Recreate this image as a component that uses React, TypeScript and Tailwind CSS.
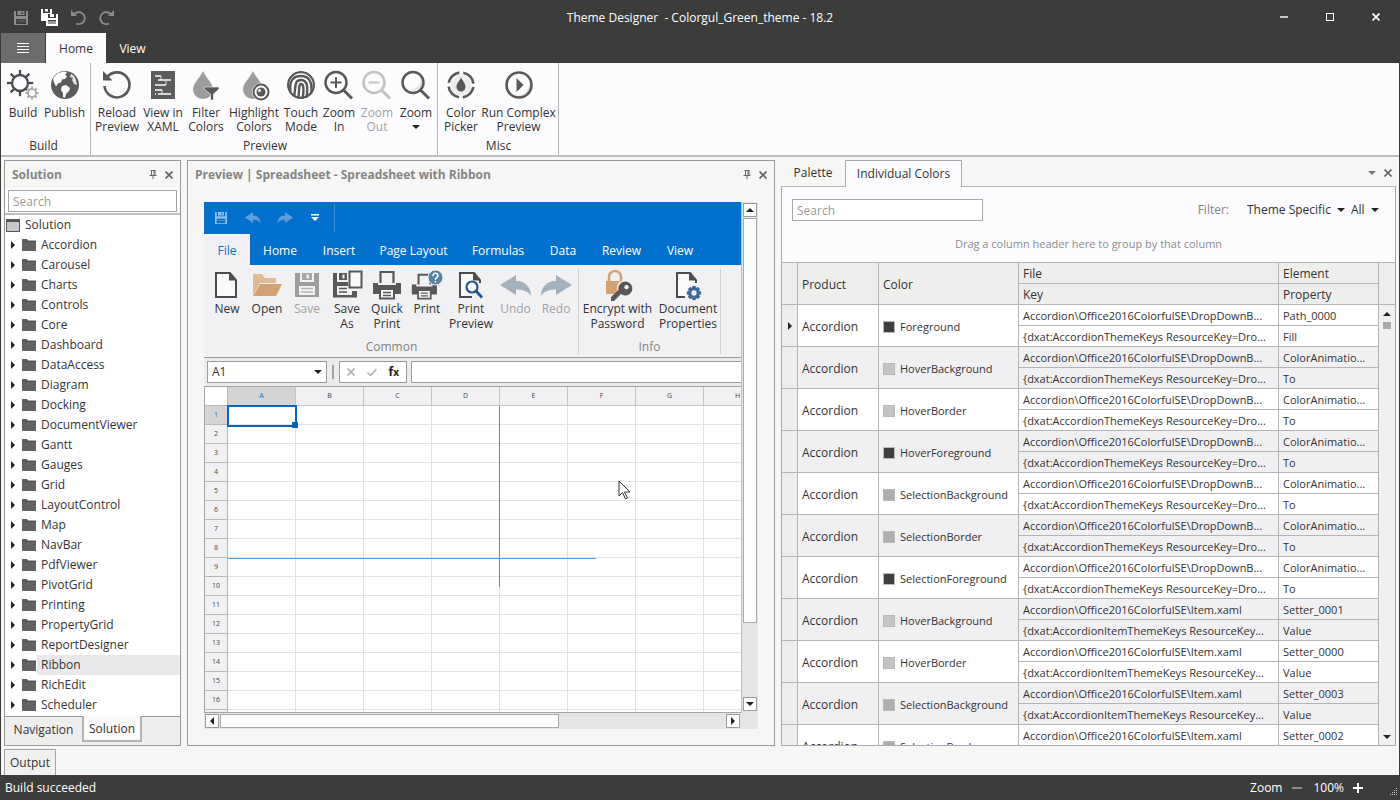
import React from 'react';
import clsx from 'clsx';

const TREE = [
  'Accordion', 'Carousel', 'Charts', 'Controls', 'Core', 'Dashboard', 'DataAccess', 'Diagram',
  'Docking', 'DocumentViewer', 'Gantt', 'Gauges', 'Grid', 'LayoutControl', 'Map', 'NavBar',
  'PdfViewer', 'PivotGrid', 'Printing', 'PropertyGrid', 'ReportDesigner', 'Ribbon', 'RichEdit', 'Scheduler',
];

const DROP_FILE = 'Accordion\\Office2016ColorfulSE\\DropDownB...';
const DROP_KEY = '{dxat:AccordionThemeKeys ResourceKey=Dro...';
const ITEM_FILE = 'Accordion\\Office2016ColorfulSE\\Item.xaml';
const ITEM_KEY = '{dxat:AccordionItemThemeKeys ResourceKey...';

const DARK = 'bg-[#3f3f40]';
const LIGHT = 'bg-[#c4c4c4]';
const MID = 'bg-[#adaeb0]';

const ROWS = [
  { color: 'Foreground', swatch: DARK, file: DROP_FILE, key: DROP_KEY, element: 'Path_0000', property: 'Fill' },
  { color: 'HoverBackground', swatch: LIGHT, file: DROP_FILE, key: DROP_KEY, element: 'ColorAnimatio...', property: 'To' },
  { color: 'HoverBorder', swatch: LIGHT, file: DROP_FILE, key: DROP_KEY, element: 'ColorAnimatio...', property: 'To' },
  { color: 'HoverForeground', swatch: DARK, file: DROP_FILE, key: DROP_KEY, element: 'ColorAnimatio...', property: 'To' },
  { color: 'SelectionBackground', swatch: MID, file: DROP_FILE, key: DROP_KEY, element: 'ColorAnimatio...', property: 'To' },
  { color: 'SelectionBorder', swatch: MID, file: DROP_FILE, key: DROP_KEY, element: 'ColorAnimatio...', property: 'To' },
  { color: 'SelectionForeground', swatch: DARK, file: DROP_FILE, key: DROP_KEY, element: 'ColorAnimatio...', property: 'To' },
  { color: 'HoverBackground', swatch: LIGHT, file: ITEM_FILE, key: ITEM_KEY, element: 'Setter_0001', property: 'Value' },
  { color: 'HoverBorder', swatch: LIGHT, file: ITEM_FILE, key: ITEM_KEY, element: 'Setter_0000', property: 'Value' },
  { color: 'SelectionBackground', swatch: MID, file: ITEM_FILE, key: ITEM_KEY, element: 'Setter_0003', property: 'Value' },
  { color: 'SelectionBorder', swatch: MID, file: ITEM_FILE, key: ITEM_KEY, element: 'Setter_0002', property: 'Value' },
];

const SHEET_COLUMNS = ['A', 'B', 'C', 'D', 'E', 'F', 'G', 'H'];
// the last row only peeks out from under the bottom edge, so it has no number
const SHEET_ROWS = ['1', '2', '3', '4', '5', '6', '7', '8', '9', '10', '11', '12', '13', '14', '15', '16', ''];

/* ---------- small glyphs ---------- */

function Caret({ dir, className = 'text-[#222]' }: { dir: 'up' | 'down' | 'left' | 'right'; className?: string }) {
  const paths = { down: 'M0 2h8L4 6z', up: 'M0 6h8L4 2z', right: 'M2 0v8l4-4z', left: 'M6 0v8L2 4z' };
  return (
    <svg viewBox="0 0 8 8" className={clsx('size-2 shrink-0', className)} fill="currentColor">
      <path d={paths[dir]} />
    </svg>
  );
}

function CloseGlyph({ className }: { className?: string }) {
  return (
    <svg viewBox="0 0 8 8" className={clsx('size-2', className)} fill="none" stroke="currentColor" strokeWidth="1.7">
      <path d="M.5.5l7 7M7.5.5l-7 7" />
    </svg>
  );
}

function PinGlyph() {
  return (
    <svg viewBox="0 0 8 9" className="h-[9px] w-2" fill="none" stroke="#666" strokeWidth="1">
      <path d="M1.5.5h5M2.5.5v5M5 .5v5M6 .5v5M.5 5.5h7M4 6v3" />
    </svg>
  );
}

function Folder() {
  return (
    <svg viewBox="0 0 14 12" className="h-3 w-[14px] shrink-0">
      <path d="M0 0h5l1 1.500h8V12H0z" fill="#626262" />
      <path d="M0 2.500h14" stroke="#4c4c50" strokeWidth=".8" />
    </svg>
  );
}

function Floppy({ size }: { size: string }) {
  return (
    <svg viewBox="0 0 14 14" className={size} fill="currentColor">
      <path fillRule="evenodd" d="M0 0h2v5h10V0h2v14H0zM2 8v5h10V8z" />
      <path fillRule="evenodd" d="M3.500 0h7v4h-7zM7.500 1v2h1.500V1z" />
      <path d="M3 9.500h8v1H3z" opacity=".6" />
    </svg>
  );
}

/* ---------- ribbon icons, 32x32 ---------- */

function Gear({ cx, cy, r, color, width, teeth = 8 }: { cx: number; cy: number; r: number; color: string; width: number; teeth?: number }) {
  return (
    <g stroke={color} strokeWidth={width} fill="none">
      <circle cx={cx} cy={cy} r={r} />
      {Array.from({ length: teeth }, (_, i) => (
        <path key={i} d={`M${cx} ${cy - r}v${-r * 0.65}`} transform={`rotate(${(360 / teeth) * i} ${cx} ${cy})`} />
      ))}
    </g>
  );
}

function BigIcon({ children }: { children: React.ReactNode }) {
  return (
    <svg viewBox="0 0 32 32" className="size-8 shrink-0" fill="none">
      {children}
    </svg>
  );
}

const G = '#58585a';

const BuildIcon = (
  <BigIcon>
    <Gear cx={13} cy={14} r={8} color="#4c4c50" width={2.3} />
    <circle cx="25" cy="24" r="6" fill="#fcfcfe" />
    <Gear cx={25} cy={24} r={4} color="#a3a3a3" width={1.7} />
  </BigIcon>
);

const PublishIcon = (
  <BigIcon>
    <circle cx="16" cy="16" r="14" fill="#5c5c5e" />
    <path d="M5 8l4-4 6-1.500 3 1-2 2.500 2 1-2 3-3 .5-1 3-3 1-2 3-2-4-1-3z" fill="#fcfcfe" />
    <path d="M13 17l4-1 4 3-1 3-3 3-1 4-2-1 0-4-2-3z" fill="#fcfcfe" />
    <path d="M22 5l3 2 2 4 1 5-3-1-2-4 1-2-3-1z" fill="#e4e4e6" />
  </BigIcon>
);

const ReloadIcon = (
  <BigIcon>
    <path d="M5.500 9A12.500 12.500 0 1 1 3.500 17" stroke={G} strokeWidth="2.600" />
    <path d="M2 2v9.500h9.500z" fill={G} />
  </BigIcon>
);

const XamlIcon = (
  <BigIcon>
    <path d="M4 2h24v28H4z" fill="#5c5c5e" />
    <path d="M8 7h6M11 11h13M8 16h11M8 21h7M11 25h13M8 25h1" stroke="#fcfcfe" strokeWidth="1.600" />
    <path d="M14 7v4M19 12v4M15 21v4" stroke="#fcfcfe" strokeWidth=".8" />
  </BigIcon>
);

const FilterIcon = (
  <BigIcon>
    <path d="M13 2c3 7 10 12 10 18.500a10 9.500 0 0 1-20 0C3 14 10 9 13 2z" fill="#9c9c9c" />
    <path d="M14 18h15v2l-5.500 5v6h-3v-6L14 20z" fill={G} stroke="#fcfcfe" strokeWidth=".6" />
  </BigIcon>
);

const HighlightIcon = (
  <BigIcon>
    <path d="M15 2c3 7 10 12 10 18.500a10 9.500 0 0 1-20 0C5 14 12 9 15 2z" fill="#9c9c9c" />
    <circle cx="23" cy="23" r="9" fill="#fcfcfe" />
    <circle cx="23" cy="23" r="7.500" stroke={G} strokeWidth="2" />
    <circle cx="23" cy="23" r="4.500" fill={G} />
    <circle cx="21.500" cy="21.500" r="1.500" fill="#fff" />
  </BigIcon>
);

const TouchIcon = (
  <BigIcon>
    <clipPath id="finger"><circle cx="16" cy="16" r="14" /></clipPath>
    <g stroke="#58585a" strokeWidth="2.400" clipPath="url(#finger)">
      <circle cx="16" cy="16" r="13" />
      <path d="M5.500 23C4 12 8 7 16 7s12 6 10 18" />
      <path d="M9 28C11 18 9 11 16 11s7 8 5.500 18" />
      <path d="M13 30C15 22 13 15 16 15s3 6 1.500 15" />
    </g>
  </BigIcon>
);

function Magnifier({ sign, color = G }: { sign?: string; color?: string }) {
  return (
    <BigIcon>
      {!sign && <path d="M20 7a10 10 0 0 1-13 13c6 4 14 0 15-6 0-3 0-5-2-7z" fill="#dadadc" />}
      <circle cx="13" cy="13.500" r="10.500" stroke={color} strokeWidth="2.500" />
      <path d="M20.500 21l8.500 8.500" stroke={color} strokeWidth="3" />
      {sign && <path d={sign} stroke={color} strokeWidth="2" />}
    </BigIcon>
  );
}

const PickerIcon = (
  <BigIcon>
    <circle cx="16" cy="16" r="10.500" fill="#ececee" />
    <circle cx="16" cy="16" r="12.500" stroke={G} strokeWidth="2.600" strokeDasharray="15.630 4" strokeDashoffset="-2" />
    <path d="M16 8.500c2 4 4.500 6 4.500 9.500a4.500 4.500 0 0 1-9 0c0-3.500 2.500-5.500 4.500-9.500z" fill={G} />
  </BigIcon>
);

const RunIcon = (
  <BigIcon>
    <path d="M26 10a12 12 0 0 1-17 16c8 3 19-2 17-16z" fill="#e2e2e4" />
    <circle cx="16" cy="16" r="12.500" stroke={G} strokeWidth="2.600" />
    <path d="M13.500 9v14l7-7z" fill={G} />
  </BigIcon>
);

/* ---------- icons of the previewed spreadsheet ---------- */

const NewIcon = (
  <BigIcon>
    <path d="M5 4h14l6 7v17H5z" stroke="#4c4c50" strokeWidth="2" fill="#fafafa" />
    <path d="M18 4v7.500h7z" fill="#4c4c50" />
  </BigIcon>
);

const OpenIcon = (
  <BigIcon>
    <path d="M2 5h9l3 4h11v5H9L2 26z" fill="#dfba94" />
    <path d="M9 15h22l-6 12H2z" fill="#d2a274" />
  </BigIcon>
);

const SaveIcon = (
  <BigIcon>
    <path d="M4 4h5v9h14V4h5v24H4z" fill="#9d9d9f" />
    <path d="M11 4h10v7H11zM15.500 5.500v4h2.500v-4z" fill="#a8a8aa" fillRule="evenodd" />
    <path d="M8 17h16v9H8z" fill="#f1f1f3" />
    <path d="M10 19.500h12M10 23h12" stroke="#b4b4b6" strokeWidth="1.500" />
  </BigIcon>
);

const SaveAsIcon = (
  <BigIcon>
    <path d="M2 4h4v9h11v4H6v9h15v-4h5v6.500H2z" fill={G} />
    <path d="M8 4h8v7H8zM11.500 5.500v4h2v-4z" fill={G} fillRule="evenodd" />
    <path d="M8 19.500h8M8 23h8" stroke={G} strokeWidth="1.500" />
    <path d="M18.500 2.500h12v16h-12z" stroke={G} strokeWidth="2" fill="#f8f8fa" />
  </BigIcon>
);

const PrinterBody = (
  <>
    <path d="M9.500 14V3h13v11" stroke={G} strokeWidth="2.200" />
    <path d="M2 14h5v2h18v-2h5v11H2z" fill={G} />
    <path d="M9 20h14v9.500H9z" fill="#f8f8fa" stroke={G} strokeWidth="2" />
    <path d="M12 23.500h8M12 26.500h8" stroke={G} strokeWidth="1.400" />
  </>
);

const QuickPrintIcon = <BigIcon>{PrinterBody}</BigIcon>;

const PrintIcon = (
  <BigIcon>
    <g transform="translate(-1 3) scale(.9)">{PrinterBody}</g>
    <circle cx="24.500" cy="8.500" r="7.500" fill="#5583a0" stroke="#f1f1f3" strokeWidth="1" />
    <path d="M22 7c0-3.500 5-3.500 5-.5 0 2-2.500 2-2.500 4.200M24.500 12v1.600" stroke="#fff" strokeWidth="1.600" />
  </BigIcon>
);

const PrintPreviewIcon = (
  <BigIcon>
    <path d="M25 14v-3l-6-7H5v24h12" stroke="#4c4c50" strokeWidth="2" fill="#fafafa" />
    <path d="M18 4v7.500h7z" fill="#4c4c50" />
    <circle cx="17" cy="18" r="5.500" stroke="#22578f" strokeWidth="2.200" fill="#fafafa" />
    <path d="M21 22l6 6.500" stroke="#22578f" strokeWidth="2.800" />
  </BigIcon>
);

const UndoIcon = (
  <BigIcon>
    <path d="M0 16L16 6v6c9 0 15 6 15 15-3-5-8-6.500-15-6.500V26z" fill="#a3b1bf" />
  </BigIcon>
);

const RedoIcon = (
  <BigIcon>
    <path d="M32 16L16 6v6C7 12 1 18 1 27c3-5 8-6.500 15-6.500V26z" fill="#a3b1bf" />
  </BigIcon>
);

const EncryptIcon = (
  <BigIcon>
    <path d="M7 13V8a6 6 0 0 1 12 0v5" stroke="#d2a274" strokeWidth="2.500" />
    <path d="M4 12h17v13H4z" fill="#d2a274" />
    <circle cx="23" cy="19" r="8" fill="#f1f1f3" />
    <path fillRule="evenodd" d="M23 12.500a7 7 0 1 1-4 12.500L12 32H9v-4l7.500-7A7 7 0 0 1 23 12.500zM24.500 16a2.200 2.200 0 1 0 .1 0z" fill={G} />
  </BigIcon>
);

const PropertiesIcon = (
  <BigIcon>
    <path d="M24 14v-3l-6-7H5v24h8" stroke="#4c4c50" strokeWidth="2" fill="#fafafa" />
    <path d="M17 4v7.500h7z" fill="#4c4c50" />
    <circle cx="22" cy="24" r="8" fill="#f1f1f3" />
    <Gear cx={22} cy={24} r={4.300} color="#3c699b" width={3.300} />
  </BigIcon>
);

/* ---------- shared pieces ---------- */

interface RibbonButtonProps {
  icon: React.ReactNode;
  lines: string[];
  width: string;
  disabled?: boolean;
  arrow?: boolean;
  sheet?: boolean;
}

function RibbonButton({ icon, lines, width, disabled, arrow, sheet }: RibbonButtonProps) {
  return (
    <button
      type="button"
      disabled={disabled}
      className={clsx(
        'flex shrink-0 flex-col items-center whitespace-nowrap',
        width,
        sheet ? 'leading-[15px]' : 'leading-[14px]',
        disabled && 'text-[#a2a2a2]',
      )}
    >
      {icon}
      <span className={clsx('flex flex-col items-center', !sheet && 'mt-[5px]')}>
        {lines.map(line => <span key={line}>{line}</span>)}
        {arrow && <span className="flex h-[14px] items-center"><Caret dir="down" /></span>}
      </span>
    </button>
  );
}

function RibbonGroup({ title, children, className }: { title: string; children: React.ReactNode; className?: string }) {
  return (
    <section className={clsx('flex flex-col border-r border-[#b4b4b6] pt-1.5', className)}>
      <div className="flex flex-1">{children}</div>
      <div className="h-4 text-center leading-[14px]">{title}</div>
    </section>
  );
}

function ArrowButton({ dir }: { dir: 'up' | 'down' | 'left' | 'right' }) {
  return (
    <button type="button" aria-label={`Scroll ${dir}`} className="flex size-[14px] shrink-0 items-center justify-center border border-[#9c9ca0] bg-white">
      <Caret dir={dir} />
    </button>
  );
}

/* ---------- window chrome ---------- */

function TitleBar() {
  return (
    <header className="grid h-[33px] shrink-0 grid-cols-[1fr_auto_1fr] items-center text-white">
      <div className="flex items-center gap-[13px] pt-0.5 pl-[13px]">
        <button type="button" aria-label="Save" className="text-[#8c8c8c]"><Floppy size="size-[14px]" /></button>
        <button type="button" aria-label="Save all">
          <svg viewBox="0 0 17 17" className="size-[17px]" fill="none">
            <path d="M0 0h2v4h7V0h2v5H6v7H0z" fill="#fff" />
            <path d="M4 0h3v2.500H4z" fill="#fff" />
            <path fillRule="evenodd" d="M5 5h12v12H5zM7 5v4h8V5zM7 11v4h8v-4z" fill="#fff" />
            <path d="M9 5h4v3H9z" fill="#fff" />
            <path d="M7 12h8v3H7z" fill="#9a9a9a" />
          </svg>
        </button>
        <button type="button" aria-label="Undo">
          <svg viewBox="0 0 15 15" className="size-[15px]" fill="none" stroke="#8c8c8c" strokeWidth="1.800">
            <path d="M3 4.500a6 6 0 1 1 2 9" />
            <path d="M0 0v6h6z" fill="#8c8c8c" stroke="none" />
          </svg>
        </button>
        <button type="button" aria-label="Redo">
          <svg viewBox="0 0 15 15" className="size-[15px]" fill="none" stroke="#8c8c8c" strokeWidth="1.800">
            <path d="M12 4.500a6 6 0 1 0-2 9" />
            <path d="M15 0v6H9z" fill="#8c8c8c" stroke="none" />
          </svg>
        </button>
      </div>
      <h1 className="whitespace-pre pt-0.5">{'Theme Designer  - Colorgul_Green_theme - 18.2'}</h1>
      <div className="flex items-center justify-end">
        <button type="button" aria-label="Minimize" className="flex h-6 w-[46px] items-center justify-center">
          <span className="h-0.5 w-2 bg-[#c4c4c4]" />
        </button>
        <button type="button" aria-label="Maximize" className="flex h-6 w-[46px] items-center justify-center">
          <span className="size-2 border border-white" />
        </button>
        <button type="button" aria-label="Close" className="flex h-6 w-[46px] items-center justify-center">
          <CloseGlyph />
        </button>
      </div>
    </header>
  );
}

function RibbonTabs() {
  return (
    <nav className="flex h-[30px] shrink-0 text-white">
      <button type="button" aria-label="Menu" className="flex w-11 flex-col items-center justify-center gap-0.5 bg-[#6c6c6b]">
        <span className="h-px w-3 bg-white" />
        <span className="h-px w-3 bg-white" />
        <span className="h-px w-3 bg-white" />
        <span className="h-px w-3 bg-white" />
      </button>
      <button type="button" className="ml-px w-[60px] bg-[#fcfcfe] pt-0.5 text-[#333]">Home</button>
      <button type="button" className="w-[53px] pt-0.5">View</button>
    </nav>
  );
}

function MainRibbon() {
  return (
    <div className="flex h-[94px] shrink-0 border-b-2 border-[#bfbfbf] bg-[#fcfcfe]">
      <RibbonGroup title="Build" className="pr-[5px] pl-px">
        <RibbonButton icon={BuildIcon} lines={['Build']} width="w-[42px]" />
        <RibbonButton icon={PublishIcon} lines={['Publish']} width="w-[41px]" />
      </RibbonGroup>
      <RibbonGroup title="Preview" className="pr-px pl-[3px]">
        <RibbonButton icon={ReloadIcon} lines={['Reload', 'Preview']} width="w-[46px]" />
        <RibbonButton icon={XamlIcon} lines={['View in', 'XAML']} width="w-[46px]" />
        <RibbonButton icon={FilterIcon} lines={['Filter', 'Colors']} width="w-10" />
        <RibbonButton icon={HighlightIcon} lines={['Highlight', 'Colors']} width="w-14" />
        <RibbonButton icon={TouchIcon} lines={['Touch', 'Mode']} width="w-[38px]" />
        <RibbonButton icon={<Magnifier sign="M7.500 13.500h11M13 8v11" />} lines={['Zoom', 'In']} width="w-[38px]" />
        <RibbonButton icon={<Magnifier sign="M7.500 13.500h11" color="#c2c2c2" />} lines={['Zoom', 'Out']} width="w-[38px]" disabled />
        <RibbonButton icon={<Magnifier />} lines={['Zoom']} width="w-10" arrow />
      </RibbonGroup>
      <RibbonGroup title="Misc" className="pr-0.5 pl-[3px]">
        <RibbonButton icon={PickerIcon} lines={['Color', 'Picker']} width="w-10" />
        <RibbonButton icon={RunIcon} lines={['Run Complex', 'Preview']} width="w-[75px]" />
      </RibbonGroup>
    </div>
  );
}

function PanelHeader({ title }: { title: string }) {
  return (
    <div className="flex h-[27px] shrink-0 items-center px-[7px] font-bold text-[#848484]">
      <h2 className="flex-1 whitespace-nowrap">{title}</h2>
      <button type="button" aria-label="Auto hide" className="mr-2"><PinGlyph /></button>
      <button type="button" aria-label="Close panel"><CloseGlyph className="text-[#666]" /></button>
    </div>
  );
}

/* ---------- solution tree ---------- */

function SolutionPanel() {
  return (
    <aside className="flex min-h-0 flex-col border border-[#98989c] bg-[#f6f6f4]">
      <PanelHeader title="Solution" />
      <div className="border-b-2 border-[#bfbfc3] bg-[#fcfcfe] px-[3px] pt-0.5 pb-px">
        <input
          type="text"
          aria-label="Search solution"
          placeholder="Search"
          className="block h-[22px] w-full border border-[#a4a4a8] bg-white px-1 outline-none placeholder:text-[#999]"
        />
      </div>
      <ul className="min-h-0 flex-1 overflow-hidden bg-white">
        <li className="flex h-5 items-center gap-[5px] pl-px">
          <span className="h-[13px] w-[14px] border border-t-[3px] border-[#55555a] bg-[#c9c9c9]" />
          Solution
        </li>
        {TREE.map(name => (
          <li key={name} className="flex h-5 items-center pl-1">
            <Caret dir="right" />
            <span className="mr-px ml-[5px] flex"><Folder /></span>
            <span className={clsx('flex h-5 flex-1 items-center pl-1', name === 'Ribbon' && 'bg-[#e8e8ea]')}>{name}</span>
          </li>
        ))}
      </ul>
      <div className="flex h-[29px] shrink-0 bg-[#eeeeed]">
        <button type="button" className="h-[27px] w-[77px] border-t border-[#98989c]">Navigation</button>
        <button type="button" className="h-[26px] w-[60px] border-2 border-t-0 border-[#b4b4b6] bg-[#fafaf9] pt-0.5">Solution</button>
        <span className="flex-1 border-t border-[#98989c]" />
      </div>
    </aside>
  );
}

/* ---------- spreadsheet preview ---------- */

const SHEET_TABS = [
  { name: 'Home', width: 'w-[60px]' },
  { name: 'Insert', width: 'w-[58px]' },
  { name: 'Page Layout', width: 'w-[91px]' },
  { name: 'Formulas', width: 'w-[78px]' },
  { name: 'Data', width: 'w-[52px]' },
  { name: 'Review', width: 'w-[65px]' },
  { name: 'View', width: 'w-[52px]' },
];

function SheetRibbon() {
  return (
    <>
      <div className="flex h-8 shrink-0 items-center bg-[#0271ce] pl-[11px] text-[#8fc0ec]">
        <button type="button" aria-label="Save sheet"><Floppy size="size-3" /></button>
        <button type="button" aria-label="Undo edit" className="ml-[18px]">
          <svg viewBox="0 0 32 32" className="size-4" fill="#5c9fdc"><path d="M0 15L16 4v7c9 0 15 6 15 16-3-6-8-7.500-15-7.500V26z" /></svg>
        </button>
        <button type="button" aria-label="Redo edit" className="ml-4">
          <svg viewBox="0 0 32 32" className="size-4" fill="#5c9fdc"><path d="M32 15L16 4v7C7 11 1 17 1 27c3-6 8-7.500 15-7.500V26z" /></svg>
        </button>
        <button type="button" aria-label="Customize toolbar" className="ml-[18px]">
          <svg viewBox="0 0 8 8" className="size-2" fill="#fff"><path d="M0 0h8v1.500H0zM0 3h8L4 7z" /></svg>
        </button>
        <span className="ml-[15px] h-7 w-px bg-[#3f8fd8]" />
      </div>
      <div className="flex h-[31px] shrink-0 bg-[#0271ce] text-white">
        <button type="button" className="w-[46px] shrink-0 bg-[#f1f1f3] pt-0.5 text-[#0271ce]">File</button>
        {SHEET_TABS.map(tab => (
          <button key={tab.name} type="button" className={clsx('shrink-0 pt-0.5 whitespace-nowrap', tab.width)}>{tab.name}</button>
        ))}
      </div>
      <div className="flex h-[93px] shrink-0 border-b border-[#9c9ca0] bg-[#f1f1f3] pt-1 pb-[3px] pl-[3px]">
        <div className="flex flex-col border-r border-[#cfcfd1] pr-0.5">
          <div className="flex flex-1">
            <RibbonButton icon={NewIcon} lines={['New']} width="w-10" sheet />
            <RibbonButton icon={OpenIcon} lines={['Open']} width="w-10" sheet />
            <RibbonButton icon={SaveIcon} lines={['Save']} width="w-10" sheet disabled />
            <RibbonButton icon={SaveAsIcon} lines={['Save', 'As']} width="w-10" sheet />
            <RibbonButton icon={QuickPrintIcon} lines={['Quick', 'Print']} width="w-10" sheet />
            <RibbonButton icon={PrintIcon} lines={['Print']} width="w-10" sheet />
            <RibbonButton icon={PrintPreviewIcon} lines={['Print', 'Preview']} width="w-12" sheet />
            <RibbonButton icon={UndoIcon} lines={['Undo']} width="w-[41px]" sheet disabled />
            <RibbonButton icon={RedoIcon} lines={['Redo']} width="w-10" sheet disabled />
          </div>
          <div className="text-center leading-[14px] text-[#848484]">Common</div>
        </div>
        <div className="flex flex-col border-r border-[#cfcfd1]">
          <div className="flex flex-1">
            <RibbonButton icon={EncryptIcon} lines={['Encrypt with', 'Password']} width="w-[77px]" sheet />
            <RibbonButton icon={PropertiesIcon} lines={['Document', 'Properties']} width="w-16" sheet />
          </div>
          <div className="text-center leading-[14px] text-[#848484]">Info</div>
        </div>
      </div>
    </>
  );
}

function FormulaBar() {
  return (
    <div className="flex h-7 shrink-0 items-center bg-[#ececec] pl-[3px]">
      <div className="flex h-[22px] w-[120px] items-center border border-[#9c9ca0] bg-white pr-1">
        <input type="text" aria-label="Cell name" defaultValue="A1" className="min-w-0 flex-1 px-1 outline-none" />
        <Caret dir="down" />
      </div>
      <span className="mx-[5px] h-[14px] w-0.5 bg-[#a0a0a0]" />
      <div className="flex h-[22px] w-[68px] items-center justify-between border border-[#9c9ca0] bg-white px-[7px]">
        <button type="button" aria-label="Cancel"><CloseGlyph className="text-[#b4b4b4]" /></button>
        <button type="button" aria-label="Enter">
          <svg viewBox="0 0 10 8" className="h-2 w-[10px]" fill="none" stroke="#b4b4b4" strokeWidth="1.700"><path d="M.5 4.500L3.500 7.500 9.500 1" /></svg>
        </button>
        <button type="button" className="font-bold text-[#222]">f<span className="text-[10px]">x</span></button>
      </div>
      <input type="text" aria-label="Formula" className="ml-1 h-[22px] min-w-0 flex-1 border border-r-0 border-[#9c9ca0] bg-white outline-none" />
    </div>
  );
}

function Sheet() {
  return (
    <div className="relative min-h-0 flex-1 overflow-hidden border-t border-b border-l border-[#a4a4a8] bg-white">
      <table className="w-[567px] table-fixed border-separate border-spacing-0 text-center text-[7px] leading-[8px] text-[#444]">
        <thead>
          <tr>
            <th className="h-[19px] w-[23px] border-r border-b border-[#b8b8ba] bg-white p-0" />
            {SHEET_COLUMNS.map(name => (
              <th
                key={name}
                className={clsx('w-[68px] border-r border-b border-[#c4c4c6] p-0 font-normal', name === 'A' ? 'bg-[#d4d4d4] text-[#0271ce]' : 'bg-[#f1f1f3]')}
              >
                {name}
              </th>
            ))}
          </tr>
        </thead>
        <tbody>
          {SHEET_ROWS.map(row => (
            <tr key={row}>
              <th className={clsx('h-[19px] border-r border-b border-[#b8b8ba] p-0 font-normal', row === '1' ? 'bg-[#d4d4d4] text-[#0271ce]' : 'bg-[#f1f1f3]')}>{row}</th>
              {SHEET_COLUMNS.map(name => <td key={name} className="border-r border-b border-[#e2e2e4] p-0" />)}
            </tr>
          ))}
        </tbody>
      </table>
      {/* selected cell and the split guides */}
      <div className="absolute top-[18px] left-[22px] h-[22px] w-[70px] border-2 border-[#0a63bd]" />
      <div className="absolute top-[35px] left-[87px] size-[6px] bg-[#0a63bd]" />
      <div className="absolute top-[19px] left-[294px] h-[181px] w-px bg-[#4b93cc]" />
      <div className="absolute top-[171px] left-[23px] h-px w-[368px] bg-[#4ba0e4]" />
      <svg viewBox="0 0 13 20" className="absolute top-[93px] left-[413px] h-5 w-[13px]">
        <path d="M1 1v15l3.500-3.500 3 6.500 2-1-3-6H12z" fill="#fff" stroke="#333" strokeWidth="1" />
      </svg>
    </div>
  );
}

function PreviewPanel() {
  return (
    <main className="flex min-h-0 min-w-0 flex-col border border-[#98989c] bg-[#f6f6f4]">
      <PanelHeader title="Preview | Spreadsheet - Spreadsheet with Ribbon" />
      <div className="mx-4 mt-[14px] mb-4 grid min-h-0 flex-1 grid-cols-[minmax(0,1fr)_16px] grid-rows-[minmax(0,1fr)_16px]">
        <div className="flex min-h-0 flex-col overflow-hidden border-r border-[#bfbfc3]">
          <SheetRibbon />
          <FormulaBar />
          <Sheet />
        </div>
        <div className="flex flex-col items-center gap-px bg-[#e5e5e4] pt-px pb-0.5">
          <ArrowButton dir="up" />
          <div className="w-[14px] flex-[406] border border-[#a9a9ad] bg-[#fdfdfd]" />
          <div className="flex-[72]" />
          <ArrowButton dir="down" />
        </div>
        <div className="flex items-center gap-px bg-[#e5e5e4] pr-0.5 pl-px">
          <ArrowButton dir="left" />
          <div className="h-[14px] flex-[338] border border-[#a9a9ad] bg-[#fdfdfd]" />
          <div className="flex-[166]" />
          <ArrowButton dir="right" />
        </div>
        <div className="bg-[#e5e5e4]" />
      </div>
    </main>
  );
}

/* ---------- individual colors ---------- */

const CELL = 'overflow-hidden whitespace-nowrap border-r border-b border-[#b4b4b6] px-1 pt-0.5 pb-0 font-normal';

function ColorsTable() {
  return (
    <table className="w-full table-fixed border-separate border-spacing-0 text-left">
      <colgroup>
        <col className="w-4" />
        <col className="w-[81px]" />
        <col className="w-[140px]" />
        <col />
        <col className="w-[100px]" />
      </colgroup>
      <thead className="bg-[#eeeeed]">
        <tr className="h-[21px]">
          <th rowSpan={2} className={CELL} />
          <th rowSpan={2} className={CELL}>Product</th>
          <th rowSpan={2} className={CELL}>Color</th>
          <th className={CELL}>File</th>
          <th className={CELL}>Element</th>
        </tr>
        <tr className="h-[21px]">
          <th className={CELL}>Key</th>
          <th className={CELL}>Property</th>
        </tr>
      </thead>
      {ROWS.map((row, i) => (
        <tbody key={i} className={clsx('text-[11px]', i % 2 ? 'bg-[#f0f0f3]' : 'bg-white')}>
          <tr className="h-[21px]">
            <td rowSpan={2} className="border-r border-b border-[#b4b4b6] bg-[#eeeeed] p-0">
              {i === 0 && <span className="flex justify-center"><Caret dir="right" /></span>}
            </td>
            <td rowSpan={2} className={clsx(CELL, 'text-[12px]')}>Accordion</td>
            <td rowSpan={2} className={CELL}>
              <span className="flex items-center gap-[5px]">
                <span className={clsx('size-3 shrink-0 border border-[#b8b8b8]', row.swatch)} />
                {row.color}
              </span>
            </td>
            <td className={CELL}>{row.file}</td>
            <td className={CELL}>{row.element}</td>
          </tr>
          <tr className="h-[21px]">
            <td className={CELL}>{row.key}</td>
            <td className={CELL}>{row.property}</td>
          </tr>
        </tbody>
      ))}
    </table>
  );
}

function ColorsPanel() {
  return (
    <section className="flex min-h-0 min-w-0 flex-col">
      <div className="flex h-[27px] shrink-0">
        <button type="button" className="w-16 border-b border-[#b4b4b6]">Palette</button>
        <button type="button" className="w-[117px] border border-b-0 border-[#a9a9ad] bg-[#fcfcfe]">Individual Colors</button>
        <div className="flex flex-1 items-center justify-end gap-2 border-b border-[#b4b4b6] pr-1">
          <button type="button" aria-label="Panel list"><Caret dir="down" className="text-[#777]" /></button>
          <button type="button" aria-label="Close colors"><CloseGlyph className="text-[#666]" /></button>
        </div>
      </div>
      <div className="flex min-h-0 flex-1 flex-col border border-t-0 border-[#a9a9ad] bg-[#fcfcfe]">
        <div className="flex shrink-0 items-center pt-3 pr-4 pl-[10px]">
          <input
            type="text"
            aria-label="Search colors"
            placeholder="Search"
            className="h-[22px] w-[191px] border border-[#a9a9ad] bg-white px-1 outline-none placeholder:text-[#999]"
          />
          <label htmlFor="scope" className="ml-auto text-[#848484]">Filter:</label>
          <div className="ml-[18px] flex items-center gap-1.5">
            <select id="scope" className="appearance-none bg-transparent outline-none"><option>Theme Specific</option></select>
            <Caret dir="down" />
          </div>
          <div className="ml-1.5 flex items-center gap-1.5">
            <select aria-label="Color kind" className="appearance-none bg-transparent outline-none"><option>All</option></select>
            <Caret dir="down" />
          </div>
        </div>
        <p className="flex h-[41px] shrink-0 items-center justify-center pt-1 text-[11px] text-[#8c8c8c]">Drag a column header here to group by that column</p>
        <div className="flex min-h-0 flex-1 overflow-hidden border-t border-[#b4b4b6]">
          <div className="min-w-0 flex-1"><ColorsTable /></div>
          <div className="flex w-4 shrink-0 flex-col bg-[#f0f0f0]">
            <div className="h-[42px] border-b border-[#b4b4b6] bg-[#eeeeed]" />
            <button type="button" aria-label="Scroll list up" className="flex h-[17px] items-center justify-center"><Caret dir="up" /></button>
            <div className="mx-auto h-[7px] w-2 bg-[#a9a9ab]" />
            <button type="button" aria-label="Scroll list down" className="mt-auto flex h-[17px] items-center justify-center"><Caret dir="down" /></button>
          </div>
        </div>
      </div>
    </section>
  );
}

/* ---------- status bar ---------- */

function StatusBar() {
  return (
    <footer className="flex h-[25px] shrink-0 items-center pl-1 text-white">
      <span className="flex-1">Build succeeded</span>
      <span>Zoom</span>
      <button type="button" aria-label="Zoom out" className="ml-[10px] flex w-[10px] items-center"><span className="h-0.5 w-full bg-[#8c8c8c]" /></button>
      <span className="ml-[11px]">100%</span>
      <button type="button" aria-label="Zoom in" className="ml-[9px]">
        <svg viewBox="0 0 10 10" className="size-[10px]" stroke="#fff" strokeWidth="2"><path d="M5 0v10M0 5h10" /></svg>
      </button>
      <svg viewBox="0 0 8 8" className="mr-px mb-1 ml-[27px] size-2 self-end" fill="#c4c4c4">
        <path d="M6 0h1v1H6zM4 2h1v1H4zM6 2h1v1H6zM2 4h1v1H2zM4 4h1v1H4zM6 4h1v1H6zM0 6h1v1H0zM2 6h1v1H2zM4 6h1v1H4zM6 6h1v1H6z" />
      </svg>
    </footer>
  );
}

export default function App() {
  return (
    <div className="flex h-screen flex-col overflow-hidden bg-[#3c3c3b] px-px font-['Open_Sans','Noto_Sans',sans-serif] text-[12px] leading-4 text-[#333]">
      <TitleBar />
      <RibbonTabs />
      <MainRibbon />
      <div className="grid min-h-0 flex-1 grid-cols-[177px_minmax(0,588fr)_minmax(0,615fr)] grid-rows-[minmax(0,1fr)] gap-[6px] bg-[#f6f6f4] p-[3px]">
        <SolutionPanel />
        <PreviewPanel />
        <ColorsPanel />
      </div>
      <div className="flex h-[26px] shrink-0 bg-[#f6f6f4] pl-[3px]">
        <button type="button" className="w-[52px] border border-b-0 border-[#a4a4a8] bg-[#f0f0ef]">Output</button>
      </div>
      <StatusBar />
    </div>
  );
}
